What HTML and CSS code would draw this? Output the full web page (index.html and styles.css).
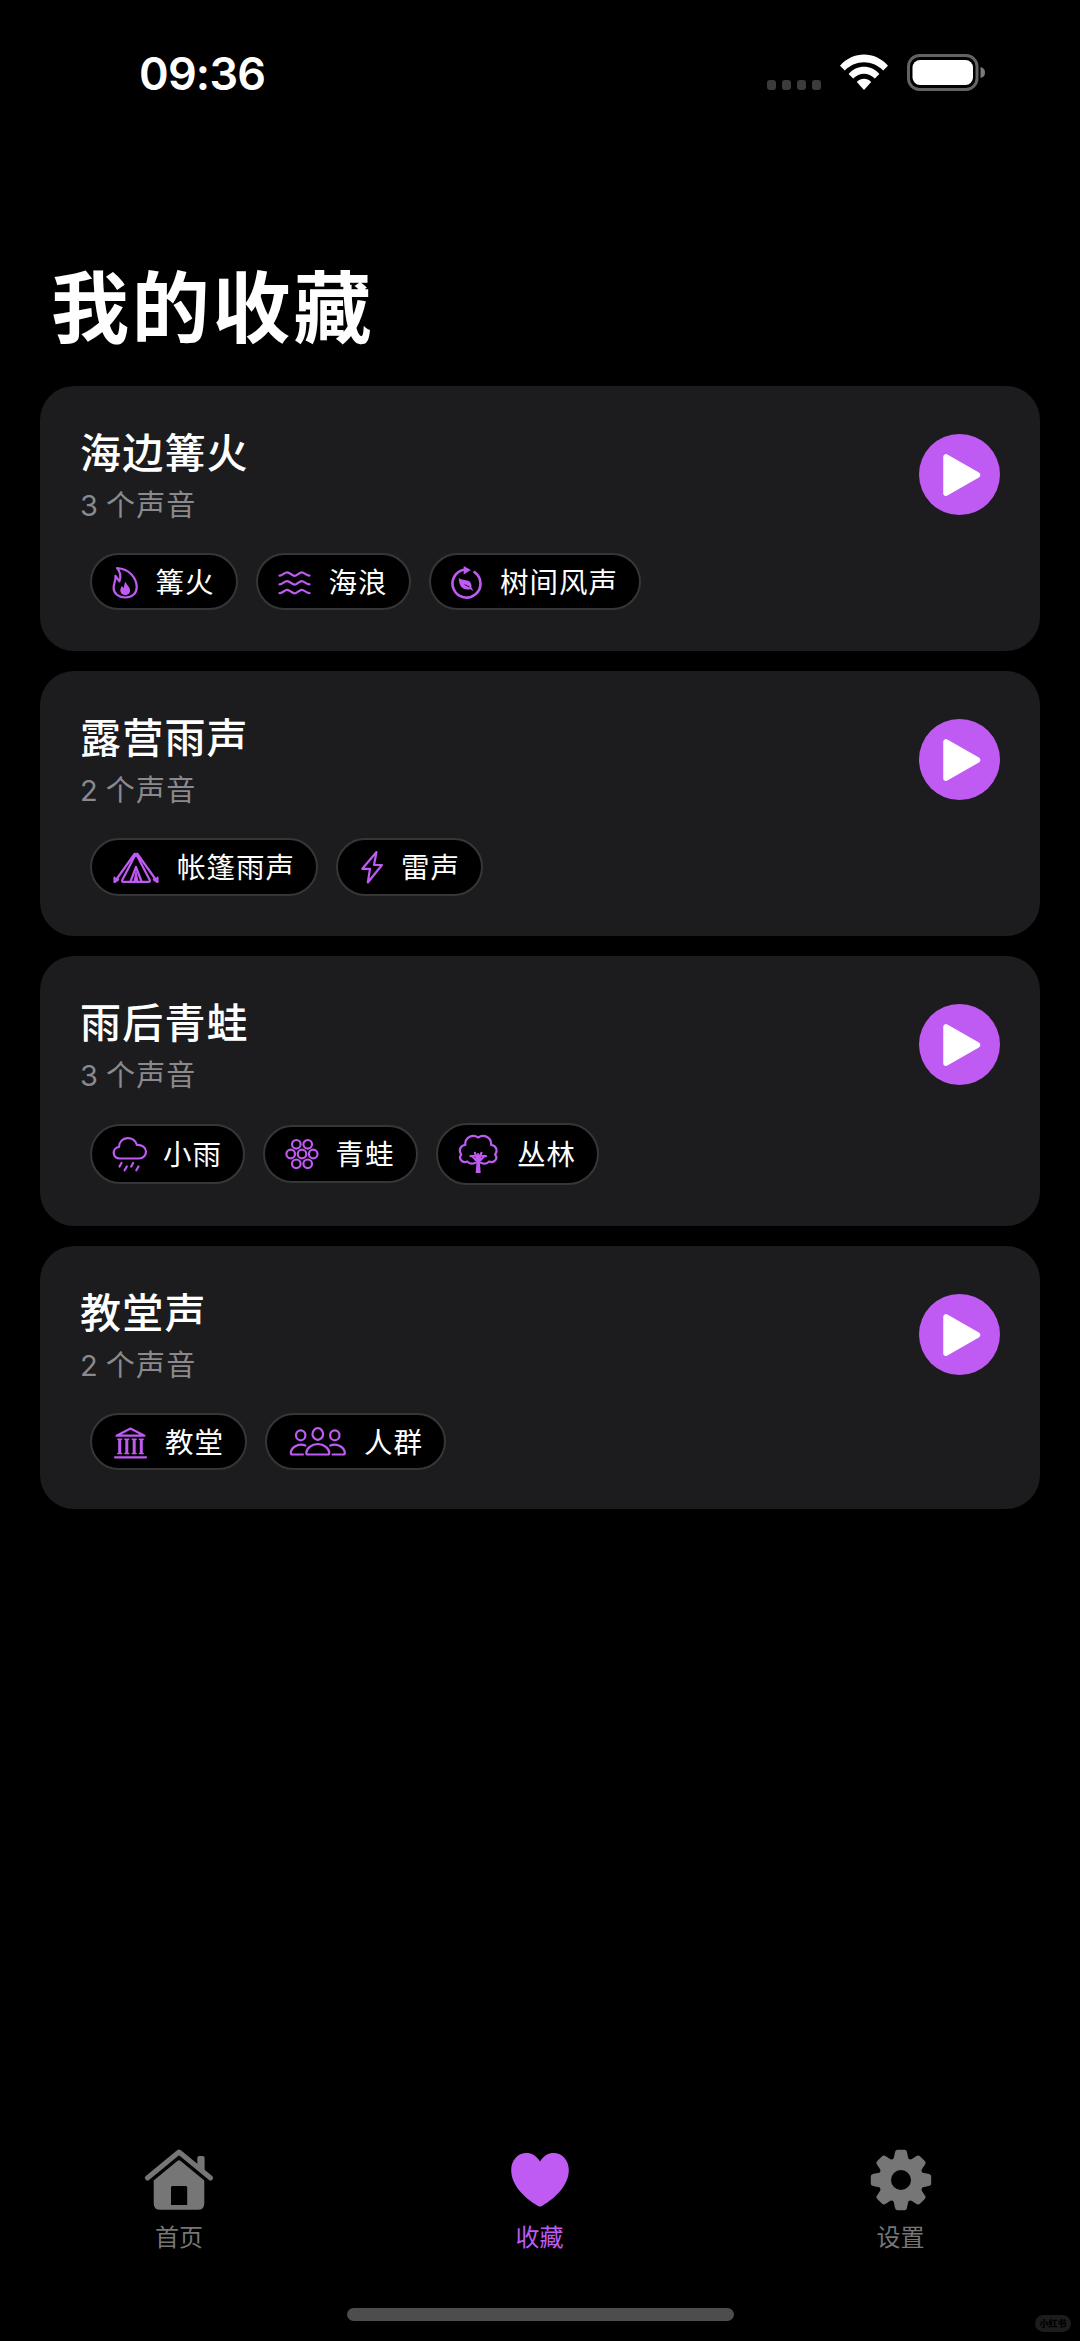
FILE: index.html
```html
<!DOCTYPE html>
<html lang="zh-CN">
<head>
<meta charset="utf-8">
<title>我的收藏</title>
<link rel="stylesheet" href="styles.css">
</head>
<body>
<div class="screen">
  <header class="status">
    <time class="clock">09:36</time>
    <div class="signals">
      <div class="dots"><i></i><i></i><i></i><i></i></div>
      <svg class="wifi" width="48" height="37" viewBox="0 0 48 37" fill="#fff">
        <path d="M0 11.8C13 -3.2 35 -3.2 48 11.8L43.2 16.4C32.5 5.4 15.500 5.400 4.800 16.400Z"/>
        <path d="M8.600 20C17 10.400 31 10.400 39.400 20L34.800 24.600C28.500 18.200 19.500 18.200 13.200 24.600Z"/>
        <path d="M16.800 28C21 23.800 27 23.800 31.200 28L24 36Z"/>
      </svg>
      <svg class="battery" width="79" height="37" viewBox="0 0 79 37">
        <rect x="1.500" y="1.500" width="68.500" height="34" rx="11" fill="none" stroke="#636363" stroke-width="3"/>
        <rect x="5.500" y="6" width="60.500" height="25" rx="7.500" fill="#fff"/>
        <path d="M73.500 13Q78 14 78 18.500T73.500 24Z" fill="#7a7a7a"/>
      </svg>
    </div>
  </header>

  <h1 class="heading">我的收藏</h1>

  <main class="cards">
    <section class="card">
      <div class="info">
        <h2 class="title">海边篝火</h2>
        <p class="count">3 个声音</p>
        <div class="pills">
          <span class="pill fire">
            <svg class="icon" width="30" height="40" viewBox="0 0 30 40">
              <path d="M7 6C20 7 26.700 16.300 26.700 25.200C26.700 31.700 22 35.500 15.300 35.500S3.600 31.500 3.600 25.700C3.600 21.300 6 18.300 5.500 13.800L9.400 19.300C11.300 14.300 10.500 9.800 7 6Z"/>
              <path class="solid" d="M15.800 19.500C15.800 23 20.100 24.500 20.100 28.500C20.100 31.500 17.800 33 15.300 33C12.300 33 10.300 31 10.300 28.500C10.300 26.500 11.300 25 11.800 24L13.800 26C14.300 24 13.800 22 15.800 19.500Z"/>
            </svg>
            <span class="label">篝火</span>
          </span>
          <span class="pill sea">
            <svg class="icon" width="38" height="40" viewBox="0 0 38 40">
              <path d="M4.500 13.600C7.500 13.600 9.500 10.300 12.200 10.300S17 13.800 19.500 13.800S24.200 10.300 26.700 10.300S31.500 13.600 34.500 13.600M4.500 22.400C7.500 22.400 9.500 19.100 12.200 19.100S17 22.600 19.500 22.600S24.200 19.100 26.700 19.100S31.500 22.400 34.500 22.400M4.500 31.200C7.500 31.200 9.500 27.900 12.200 27.900S17 31.400 19.500 31.400S24.200 27.900 26.700 27.900S31.500 31.200 34.500 31.200"/>
            </svg>
            <span class="label">海浪</span>
          </span>
          <span class="pill wind">
            <svg class="icon" width="36" height="40" viewBox="0 0 36 40">
              <path stroke-width="2.600" d="M26.500 10.100A14 14 0 1 1 16 7.800"/>
              <path class="solid" d="M15.700 4L22.800 8L15.700 12.400Z"/>
              <path class="solid" d="M10.800 16C15 19.500 24.500 16 23.500 25.500L25.500 29L22.300 27.300C14.500 28.700 10.800 24 10.800 16Z"/>
              <path d="M17 22.800L21 24.800" stroke="#000" stroke-width=".8"/>
            </svg>
            <span class="label">树间风声</span>
          </span>
        </div>
      </div>
      <button class="play" aria-label="播放"><svg width="81" height="81" viewBox="0 0 81 81"><path d="M27 22.800V59.200L58.500 41Z"/></svg></button>
    </section>

    <section class="card">
      <div class="info">
        <h2 class="title">露营雨声</h2>
        <p class="count">2 个声音</p>
        <div class="pills">
          <span class="pill tent">
            <svg class="icon" width="52" height="40" viewBox="0 0 52 40">
              <path d="M26 6.700L12.500 32.500Q11.300 34.800 13.500 34.800H38.500Q40.700 34.800 39.500 32.500ZM24.500 7L6.300 32.500M27.500 7L45.700 32.500M4.500 30.500V35L8.200 32.500M47.500 30.500V35L43.800 32.500"/>
              <path d="M26 20L20.500 34.500M26 20L31.500 34.500"/>
              <path class="solid" d="M26 22L23.500 34.500H28.500Z"/>
            </svg>
            <span class="label">帐篷雨声</span>
          </span>
          <span class="pill thunder">
            <svg class="icon" width="30" height="40" viewBox="0 0 30 40">
              <path d="M20.500 5L6.300 21.800H14L11.800 35.500L26 18H18Z"/>
            </svg>
            <span class="label">雷声</span>
          </span>
        </div>
      </div>
      <button class="play" aria-label="播放"><svg width="81" height="81" viewBox="0 0 81 81"><path d="M27 22.800V59.200L58.500 41Z"/></svg></button>
    </section>

    <section class="card">
      <div class="info">
        <h2 class="title">雨后青蛙</h2>
        <p class="count">3 个声音</p>
        <div class="pills">
          <span class="pill rain">
            <svg class="icon" width="38" height="40" viewBox="0 0 38 40">
              <path d="M10 24.500C1.800 24.500 1.800 14 9 13C9.500 1.500 24.800 1.500 26.800 10.800C32 10.500 36 13.500 36 17.500C36 21.500 33 24.500 29 24.500Z"/>
              <path d="M11.500 29L9.500 32.500M16.800 32.500L14.600 36.300M23.200 29L21.200 32.500M28.500 32.500L26.300 36.300"/>
            </svg>
            <span class="label">小雨</span>
          </span>
          <span class="pill frog">
            <svg class="icon" width="38" height="40" viewBox="0 0 38 40">
              <circle cx="13.300" cy="10.300" r="4.300"/><circle cx="24.700" cy="10.300" r="4.300"/>
              <circle cx="7.700" cy="20" r="4.300"/><circle cx="19" cy="20" r="4.300"/><circle cx="30.200" cy="20" r="4.300"/>
              <circle cx="13.300" cy="29.800" r="4.300"/><circle cx="24.700" cy="29.800" r="4.300"/>
            </svg>
            <span class="label">青蛙</span>
          </span>
          <span class="pill woods">
            <svg class="icon" width="46" height="40" viewBox="0 0 46 40">
              <path d="M20.500 28.800C17 30.300 14 29.800 12.500 27.500C7 29.500 3 24.500 6.300 20.500C3.200 16.500 5.500 11 10.300 11C9.500 3.500 17.500 -.5 23.200 3.500C28.900 -.5 36.900 3.500 36.100 11C40.900 11 43.200 16.500 40.100 20.500C43.400 24.500 39.400 29.500 33.900 27.500C32.400 29.800 29.400 30.300 25.900 28.800"/>
              <path d="M23.200 38V20M23.200 28.500L17 22M23.200 28.500L29.400 22M22.500 26L20 18.800M23.900 26L26.400 18.800M15.500 22.200H19M27.500 22.200H31"/>
              <path class="solid" d="M20.700 39L21.600 27H24.800L25.700 39Z"/>
            </svg>
            <span class="label">丛林</span>
          </span>
        </div>
      </div>
      <button class="play" aria-label="播放"><svg width="81" height="81" viewBox="0 0 81 81"><path d="M27 22.800V59.200L58.500 41Z"/></svg></button>
    </section>

    <section class="card">
      <div class="info">
        <h2 class="title">教堂声</h2>
        <p class="count">2 个声音</p>
        <div class="pills">
          <span class="pill church">
            <svg class="icon" width="40" height="40" viewBox="0 0 40 40">
              <path d="M20.500 6.500L6.500 13.700H34.500ZM5 35.300H36"/>
              <path stroke-width="3" stroke-linecap="butt" d="M9.700 17V32M16.800 17V32M24.200 17V32M31.300 17V32"/>
              <path stroke-width="1.500" d="M7.800 17.300H11.600M14.900 17.300H18.700M22.300 17.300H26.100M29.400 17.300H33.200M7.800 31.500H11.600M14.900 31.500H18.700M22.300 31.500H26.100M29.400 31.500H33.200"/>
            </svg>
            <span class="label">教堂</span>
          </span>
          <span class="pill crowd">
            <svg class="icon" width="64" height="40" viewBox="0 0 64 40">
              <ellipse cx="15.700" cy="13.300" rx="4.700" ry="5"/><ellipse cx="32.800" cy="12" rx="5.300" ry="5.800"/><ellipse cx="49.800" cy="13.300" rx="4.700" ry="5"/>
              <path d="M32.800 22C26.500 22 21.300 26.500 21.300 31Q21.300 32.500 23 32.500H42.600Q44.300 32.500 44.300 31C44.300 26.500 39 22 32.800 22Z"/>
              <path d="M20.300 23.500C13 20.500 5.800 26 5.800 31Q5.800 32.500 7.500 32.500H18M45.300 23.500C52.600 20.500 59.800 26 59.800 31Q59.800 32.500 58.100 32.500H47.600"/>
            </svg>
            <span class="label">人群</span>
          </span>
        </div>
      </div>
      <button class="play" aria-label="播放"><svg width="81" height="81" viewBox="0 0 81 81"><path d="M27 22.800V59.200L58.500 41Z"/></svg></button>
    </section>
  </main>

  <nav class="tabs">
    <a class="tab">
      <svg width="72" height="64" viewBox="0 0 72 64" fill="currentColor">
        <path d="M4.400 30L36 4L67.600 30" fill="none" stroke="currentColor" stroke-width="5" stroke-linecap="round" stroke-linejoin="round"/>
        <path d="M54.300 17V10Q54.300 8 56.300 8H59.600Q61.600 8 61.600 10V24Z"/>
        <path fill-rule="evenodd" d="M34.300 13Q36 11.600 37.700 13L61.300 32.500V55.500Q61.300 61.800 55 61.800H17Q10.700 61.800 10.700 55.500V32.500ZM29.500 38Q28 38 28 39.500V57H44.200V39.500Q44.200 38 42.700 38Z"/>
      </svg>
      <span>首页</span>
    </a>
    <a class="tab active">
      <svg width="58" height="64" viewBox="0 0 58 64" fill="currentColor">
        <path d="M29 13.500C32.500 7.500 37.500 5 42.500 5C51.500 5 57.800 12.500 57.800 22C57.800 37 45 49.500 31 58Q29 59 27 58C13 49.500 .2 37 .2 22C.2 12.500 6.500 5 15.500 5C20.500 5 25.500 7.500 29 13.500Z"/>
      </svg>
      <span>收藏</span>
    </a>
    <a class="tab">
      <svg width="62" height="64" viewBox="-31 -32 62 64" fill="currentColor">
        <circle r="16.200" fill="none" stroke="currentColor" stroke-width="12.400"/>
        <g><path id="tooth" d="M-9 -19.500C-7 -20.500 -6.800 -25 -5.800 -28.600Q-5.300 -30.200 -3.500 -30.200H3.500Q5.300 -30.200 5.800 -28.600C6.800 -25 7 -20.500 9 -19.500Z"/>
        <use href="#tooth" transform="rotate(45)"/><use href="#tooth" transform="rotate(90)"/><use href="#tooth" transform="rotate(135)"/><use href="#tooth" transform="rotate(180)"/><use href="#tooth" transform="rotate(225)"/><use href="#tooth" transform="rotate(270)"/><use href="#tooth" transform="rotate(315)"/></g>
      </svg>
      <span>设置</span>
    </a>
  </nav>
  <div class="home-bar"></div>
  <div class="watermark">小红书</div>
</div>
</body>
</html>
```
FILE: styles.css
```css
* { box-sizing: border-box; margin: 0; padding: 0; }

body {
  background: #000;
  color: #fff;
  font-family: Inter, "Noto Sans CJK SC", sans-serif;
}

svg { display: block; flex: none; }

.screen {
  position: relative;
  display: flex;
  flex-direction: column;
  width: 1080px;
  height: 2341px;
  overflow: hidden;
  background: #000;
}

.status {
  display: flex;
  justify-content: space-between;
  height: 146px;
  padding: 54px 94px 0 139px;
}

.clock {
  height: 38px;
  font-size: 45px;
  font-weight: 600;
  line-height: 40px;
  letter-spacing: -0.8px;
}

.signals { display: flex; }
.dots { display: flex; gap: 6px; margin: 26px 19px 0 0; }
.dots i { width: 9px; height: 10px; border-radius: 3px; background: #3b3b3b; }
.battery { margin-left: 19px; }

.heading {
  height: 240px;
  padding: 105px 0 0 51px;
  font-size: 78px;
  font-weight: 700;
  line-height: 116px;
  letter-spacing: 2.800px;
}

.cards {
  display: grid;
  grid-template-rows: 265px 265px 270px 263px;
  gap: 20px;
  padding: 0 40px;
}

.card {
  display: flex;
  justify-content: space-between;
  padding: 40px 40px 0;
  border-radius: 34px;
  background: #1c1c1e;
}

.title {
  padding-top: 1px;
  font-size: 41px;
  font-weight: 500;
  line-height: 52px;
  letter-spacing: 1.200px;
}

.count {
  margin-top: 8px;
  color: #8a8a8e;
  font-size: 29px;
  line-height: 38px;
  letter-spacing: 1.200px;
  word-spacing: -2.500px;
}

.pills {
  display: flex;
  align-items: center;
  gap: 18px;
  margin: 28px 0 0 10px;
}

.pill {
  display: flex;
  align-items: center;
  justify-content: space-between;
  height: 57px;
  padding: 0 21px 0 17.500px;
  border: 2px solid #363638;
  border-radius: 31px;
  background: #000;
}

.fire { width: 147.500px; }
.sea { width: 155px; }
.wind { width: 212.500px; }
.tent { width: 228px; height: 58px; }
.thunder { width: 147px; height: 58px; }
.rain { width: 155px; height: 60px; }
.frog { width: 154.500px; height: 58px; }
.woods { width: 163.500px; height: 62px; }
.church { width: 157px; }
.crowd { width: 181px; }

.icon {
  fill: none;
  stroke: #bf5af2;
  stroke-width: 2.200;
  stroke-linecap: round;
  stroke-linejoin: round;
}
.icon .solid { fill: #bf5af2; stroke: none; }

.label {
  padding-top: 2px;
  font-size: 28.500px;
  line-height: 40px;
  letter-spacing: 1px;
  white-space: nowrap;
}

.play {
  width: 81px;
  height: 81px;
  margin-top: 8px;
  border: 0;
  border-radius: 50%;
  background: #bf5af2;
}
.play path { fill: #fff; stroke: #fff; stroke-width: 5.500; stroke-linejoin: round; }

.tabs {
  display: grid;
  grid-template-columns: 358px 363px 359px;
  margin-top: auto;
}

.tab {
  display: flex;
  flex-direction: column;
  align-items: center;
  gap: 9px;
  height: 160px;
  color: #767676;
  font-size: 24px;
  line-height: 34px;
}
.tab.active { color: #bf5af2; }

.home-bar {
  width: 387px;
  height: 13px;
  margin: 0 auto 20px;
  border-radius: 7px;
  background: #4d4d4d;
}

.watermark {
  position: absolute;
  right: 9px;
  bottom: 9px;
  width: 36px;
  height: 17px;
  border-radius: 9px;
  background: #1c1c1c;
  color: #000;
  font-size: 9px;
  font-weight: 900;
  line-height: 17px;
  text-align: center;
}
```
